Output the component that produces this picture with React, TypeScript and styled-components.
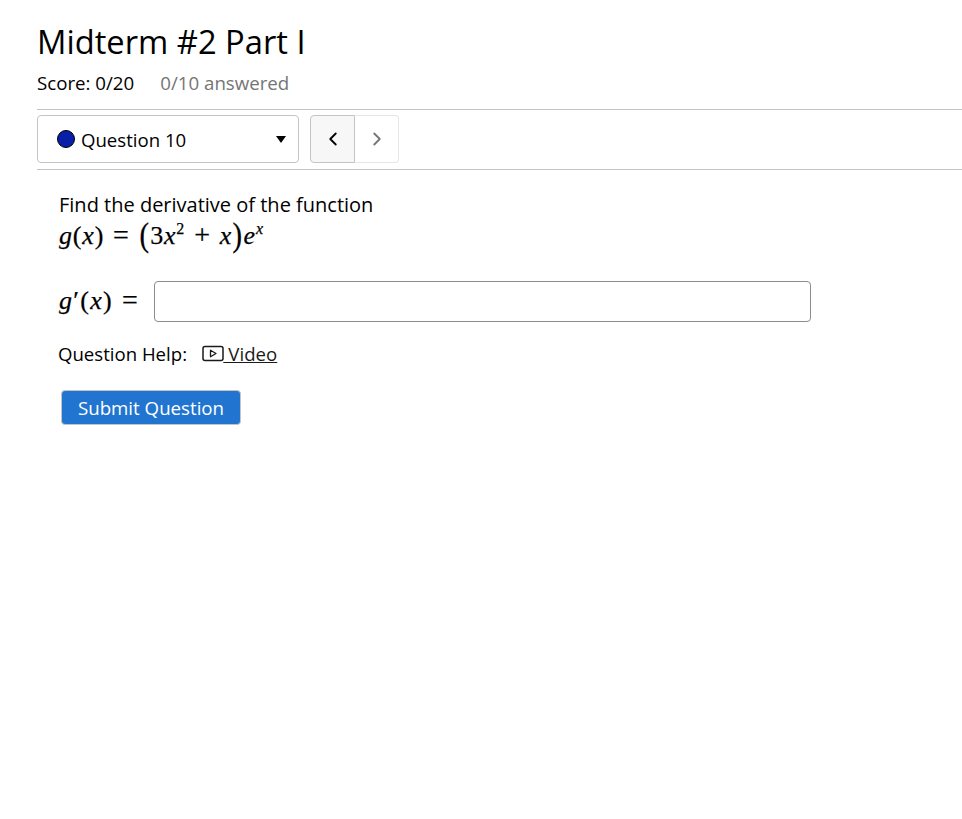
import { createGlobalStyle } from "styled-components";
import styled from "styled-components";
import { ChevronLeft, ChevronRight } from "lucide-react";

const GlobalStyle = createGlobalStyle`
  html, body {
    margin: 0;
    padding: 0;
    background: #fff;
    font-family: "Open Sans", "Liberation Sans", sans-serif;
    color: #000;
  }
`

const Page = styled.div`
  width: 962px;
  height: 819px;
  padding: 19px 0 0 37px;
  box-sizing: border-box;
  overflow: hidden;
`

const Title = styled.h1`
  margin: 0;
  font-size: 32.7px;
  line-height: 46px;
  font-weight: 400;
  color: #000;
`

const ScoreRow = styled.div`
  display: flex;
  gap: 26px;
  margin-top: 6px;
  font-size: 18.7px;
  line-height: 24px;
  height: 38px;
`

const Muted = styled.span`
  color: #757575;
`

const Toolbar = styled.div`
  display: flex;
  gap: 11px;
  height: 48px;
  padding: 5px 0 6px;
  border-top: 1px solid #c4c4c4;
  border-bottom: 1px solid #c4c4c4;
`

const Select = styled.div`
  width: 262px;
  height: 48px;
  box-sizing: border-box;
  display: flex;
  align-items: center;
  padding: 0 12px 0 19px;
  border: 1px solid #c4c4c4;
  border-radius: 4px;
  font-size: 18.6px;
`

const Dot = styled.span`
  width: 16px;
  height: 16px;
  border-radius: 50%;
  background: #0a1fa8;
  border: 1px solid #000;
  margin-right: 6px;
`

const SelectLabel = styled.span`
  flex: 1;
  padding-top: 1px;
`

const Caret = styled.span`
  width: 0;
  height: 0;
  border-left: 5.5px solid transparent;
  border-right: 5.5px solid transparent;
  border-top: 7px solid #000;
`

const Pager = styled.div`
  display: flex;
  height: 48px;
`

const PageButton = styled.div<{ $active?: boolean }>`
  width: ${(p) => (p.$active ? "45px" : "44px")};
  box-sizing: border-box;
  display: flex;
  align-items: center;
  justify-content: center;
  background: ${(p) => (p.$active ? "#f7f7f7" : "#fff")};
  border: 1px solid ${(p) => (p.$active ? "#c4c4c4" : "#e6e6e6")};
  border-left-width: ${(p) => (p.$active ? "1px" : "0")};
  border-radius: ${(p) => (p.$active ? "4px 0 0 4px" : "0 4px 4px 0")};
  color: ${(p) => (p.$active ? "#000" : "#757575")};
`

const Question = styled.div`
  padding: 22px 0 0 22px;
`

const Prompt = styled.div`
  font-size: 20px;
  line-height: 25px;
  height: 29px;
`

const MathLine = styled.div`
  font-family: "Liberation Serif", serif;
  font-size: 26px;
  line-height: 30px;
  height: 30px;
  white-space: nowrap;
  letter-spacing: 0.8px;
  -webkit-text-stroke: 0.25px #000;
`

const V = styled.i`
  font-weight: 500;
`

const Sup = styled.sup`
  font-size: 16px;
  line-height: 0;
`

const Op = styled.span`
  margin: 0 9px;
  font-size: 28px;
  line-height: 0;
`

const BigParen = styled.span`
  display: inline-block;
  margin: 0 1px;
  font-weight: 400;
  line-height: 26px;
  transform: scale(1.1, 1.3);
`

const AnswerRow = styled.div`
  display: flex;
  align-items: center;
  margin-top: 30px;
  height: 41px;
`

const AnswerLabel = styled(MathLine)`
  width: 95px;
  letter-spacing: 1.3px;
  margin-top: -2px;
`

const AnswerInput = styled.input`
  width: 657px;
  height: 41px;
  box-sizing: border-box;
  border: 1px solid #8c8c8c;
  border-radius: 4px;
  background: #fff;
  padding: 0 8px;
  outline: none;
`

const HelpRow = styled.div`
  display: flex;
  align-items: center;
  margin: 19px 0 0 -1px;
  height: 25px;
  font-size: 18.6px;
`

const HelpLink = styled.a`
  display: flex;
  align-items: center;
  margin-left: 15px;
  color: #1a1a1a;
`

const VideoIcon = styled.svg`
  width: 22px;
  height: 17px;
  margin-right: -0.5px;
`

const LinkText = styled.span`
  text-decoration: underline;
  white-space: pre;
`

const SubmitButton = styled.button`
  display: block;
  margin: 24px 0 0 2px;
  width: 180px;
  height: 35px;
  box-sizing: border-box;
  border: 1px solid #c4c4c4;
  border-radius: 4px;
  background: #2175d0;
  color: #fff;
  font-family: inherit;
  font-size: 18.7px;
  padding: 0;
`

export default function App() {
  return (
    <Page>
      <GlobalStyle />
      <Title>Midterm #2 Part I</Title>
      <ScoreRow>
        <span>Score: 0/20</span>
        <Muted>0/10 answered</Muted>
      </ScoreRow>
      <Toolbar>
        <Select>
          <Dot />
          <SelectLabel>Question 10</SelectLabel>
          <Caret />
        </Select>
        <Pager>
          <PageButton $active>
            <ChevronLeft size={22} strokeWidth={2} />
          </PageButton>
          <PageButton>
            <ChevronRight size={22} strokeWidth={2} />
          </PageButton>
        </Pager>
      </Toolbar>
      <Question>
        <Prompt>Find the derivative of the function</Prompt>
        <MathLine>
          <V>g</V>(<V>x</V>)<Op>=</Op>
          <BigParen>(</BigParen>3<V>x</V>
          <Sup>2</Sup>
          <Op>+</Op>
          <V>x</V>
          <BigParen>)</BigParen>
          <V>e</V>
          <Sup>
            <V>x</V>
          </Sup>
        </MathLine>
        <AnswerRow>
          <AnswerLabel>
            <V>g</V>′(<V>x</V>)<Op>=</Op>
          </AnswerLabel>
          <AnswerInput />
        </AnswerRow>
        <HelpRow>
          Question Help:
          <HelpLink href="#">
            <VideoIcon viewBox="0 0 22 17" fill="none">
              <rect x="1" y="1.5" width="20" height="14" rx="2" stroke="#1a1a1a" strokeWidth="1.5" />
              <path d="M8.5 5.2v6.6l5.5-3.3z" stroke="#1a1a1a" strokeWidth="1.3" strokeLinejoin="round" />
            </VideoIcon>
            <LinkText>{"\u00a0"}Video</LinkText>
          </HelpLink>
        </HelpRow>
        <SubmitButton>Submit Question</SubmitButton>
      </Question>
    </Page>
  );
}
